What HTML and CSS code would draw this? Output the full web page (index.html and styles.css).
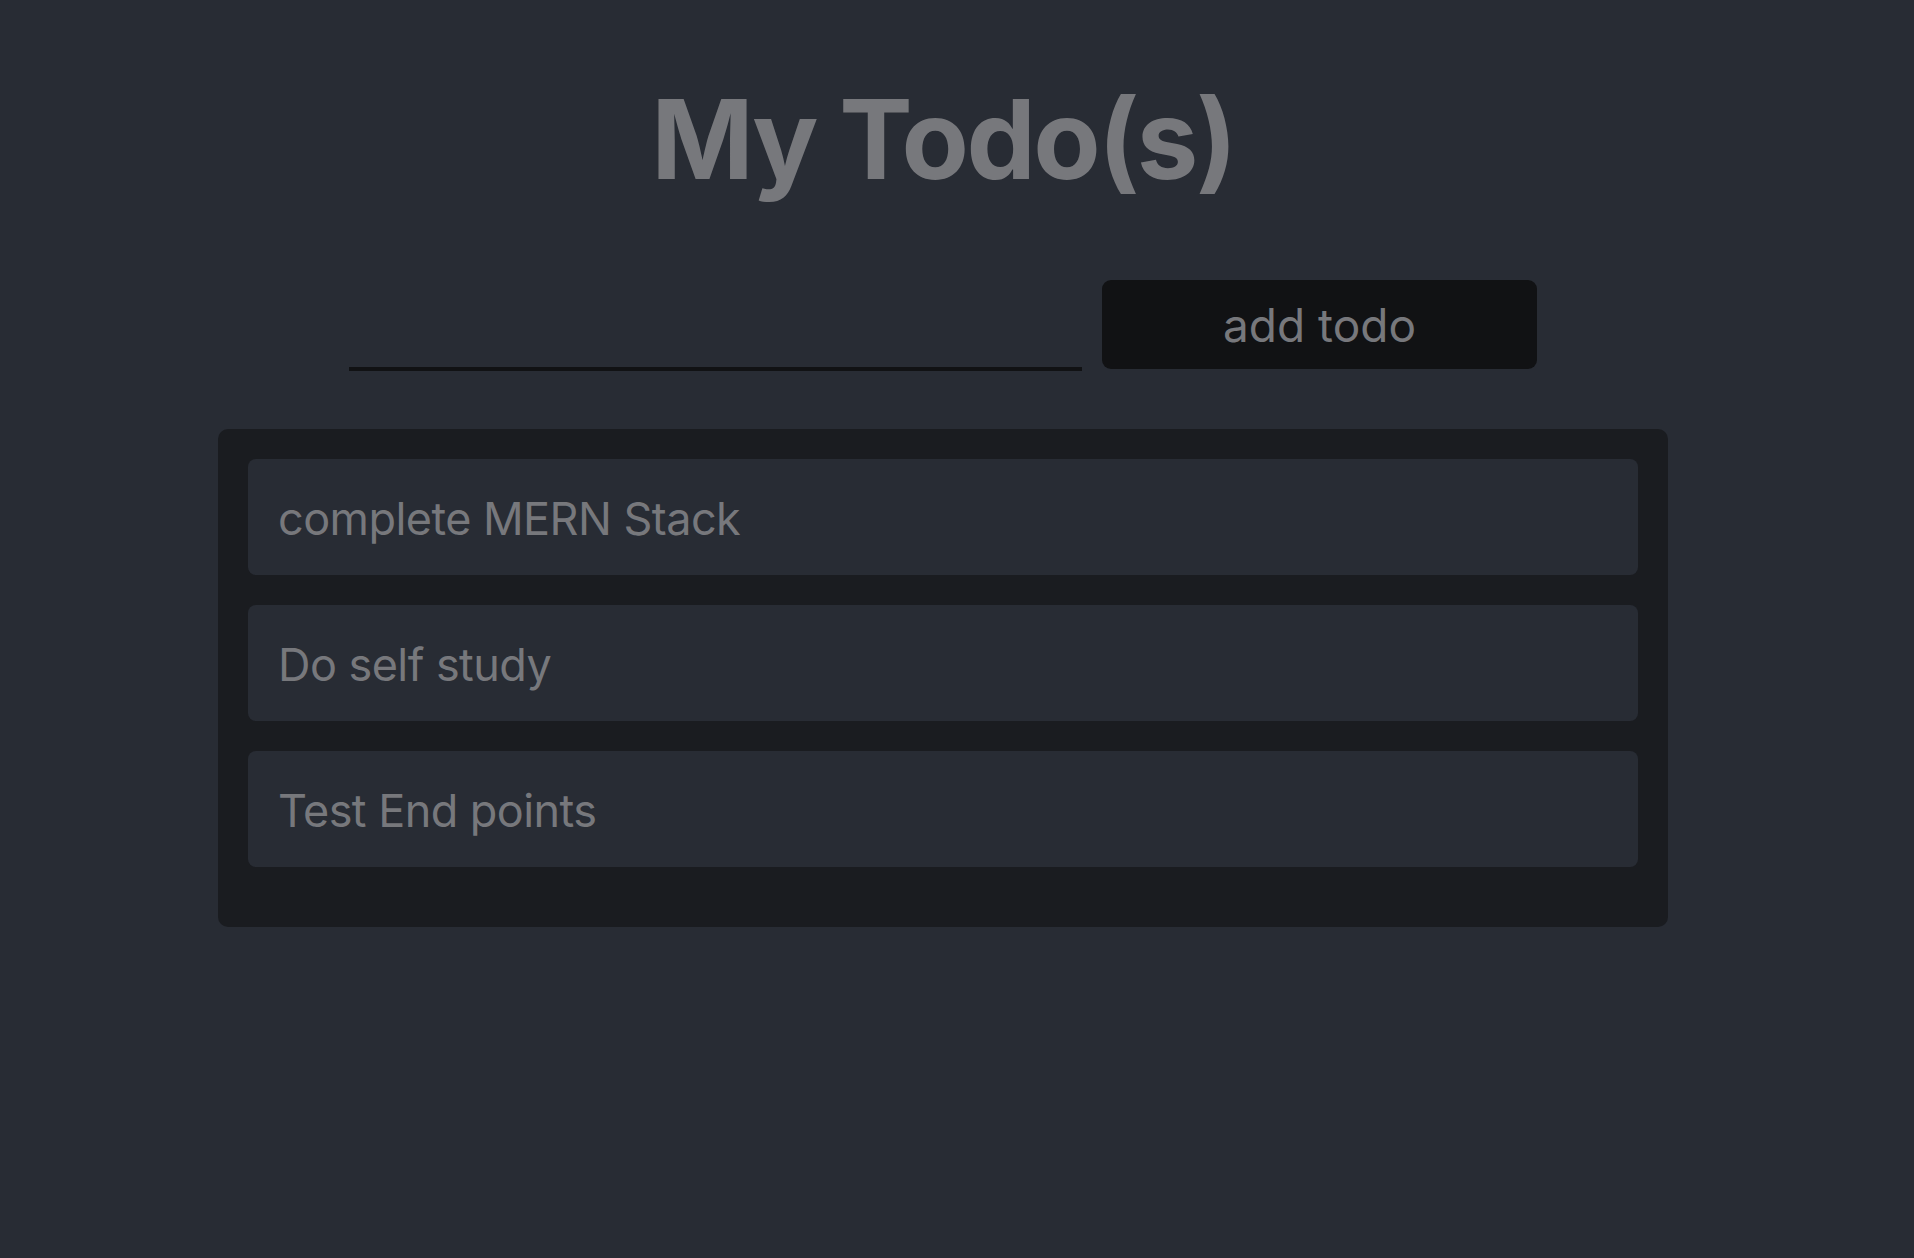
FILE: index.html
```html
<!DOCTYPE html>
<html lang="en">
<head>
<meta charset="utf-8">
<title>My Todo(s)</title>
<link rel="stylesheet" href="styles.css">
</head>
<body>
<div class="app">
  <h1 class="title">My Todo(s)</h1>
  <form class="add-row">
    <input class="todo-input" type="text" aria-label="New todo">
    <button class="add-btn" type="button">add todo</button>
  </form>
  <ul class="todo-list">
    <li class="todo-item">complete MERN Stack</li>
    <li class="todo-item">Do self study</li>
    <li class="todo-item">Test End points</li>
  </ul>
</div>
</body>
</html>
```
FILE: styles.css
```css
html, body {
  margin: 0;
  padding: 0;
  background: #282c34;
}
body {
  min-height: 1258px;
  font-family: Inter, "Noto Sans", "Liberation Sans", sans-serif;
  color: #77787c;
}
.app {
  display: flex;
  flex-direction: column;
  align-items: center;
  padding: 73px 28px 0 0;
}
.title {
  margin: 0;
  font-size: 110px;
  font-weight: 700;
  line-height: 133px;
  color: #77787c;
  letter-spacing: -2.6px;
}
.add-row {
  display: flex;
  align-items: flex-start;
  gap: 20px;
  margin: 74px 0 0 0;
  height: 92px;
}
.todo-input {
  box-sizing: border-box;
  width: 733px;
  height: 91px;
  margin-top: 0;
  background: transparent;
  border: none;
  border-bottom: 4px solid #111214;
  outline: none;
  color: #77787c;
  font-family: inherit;
  font-size: 45px;
}
.add-btn {
  width: 435px;
  height: 89px;
  border: none;
  border-radius: 9px;
  background: #111214;
  color: #77787c;
  font-family: inherit;
  font-size: 46px;
  padding: 0;
}
.todo-list {
  list-style: none;
  box-sizing: border-box;
  width: 1450px;
  margin: 57px 0 0 0;
  padding: 30px 30px 30px 30px;
  background: #1a1c20;
  border-radius: 10px;
}
.todo-item {
  background: #282c34;
  border-radius: 8px;
  padding: 32px 30px 28px 30px;
  font-size: 45px;
  line-height: 56px;
  letter-spacing: -0.55px;
  margin-bottom: 30px;
}
```
